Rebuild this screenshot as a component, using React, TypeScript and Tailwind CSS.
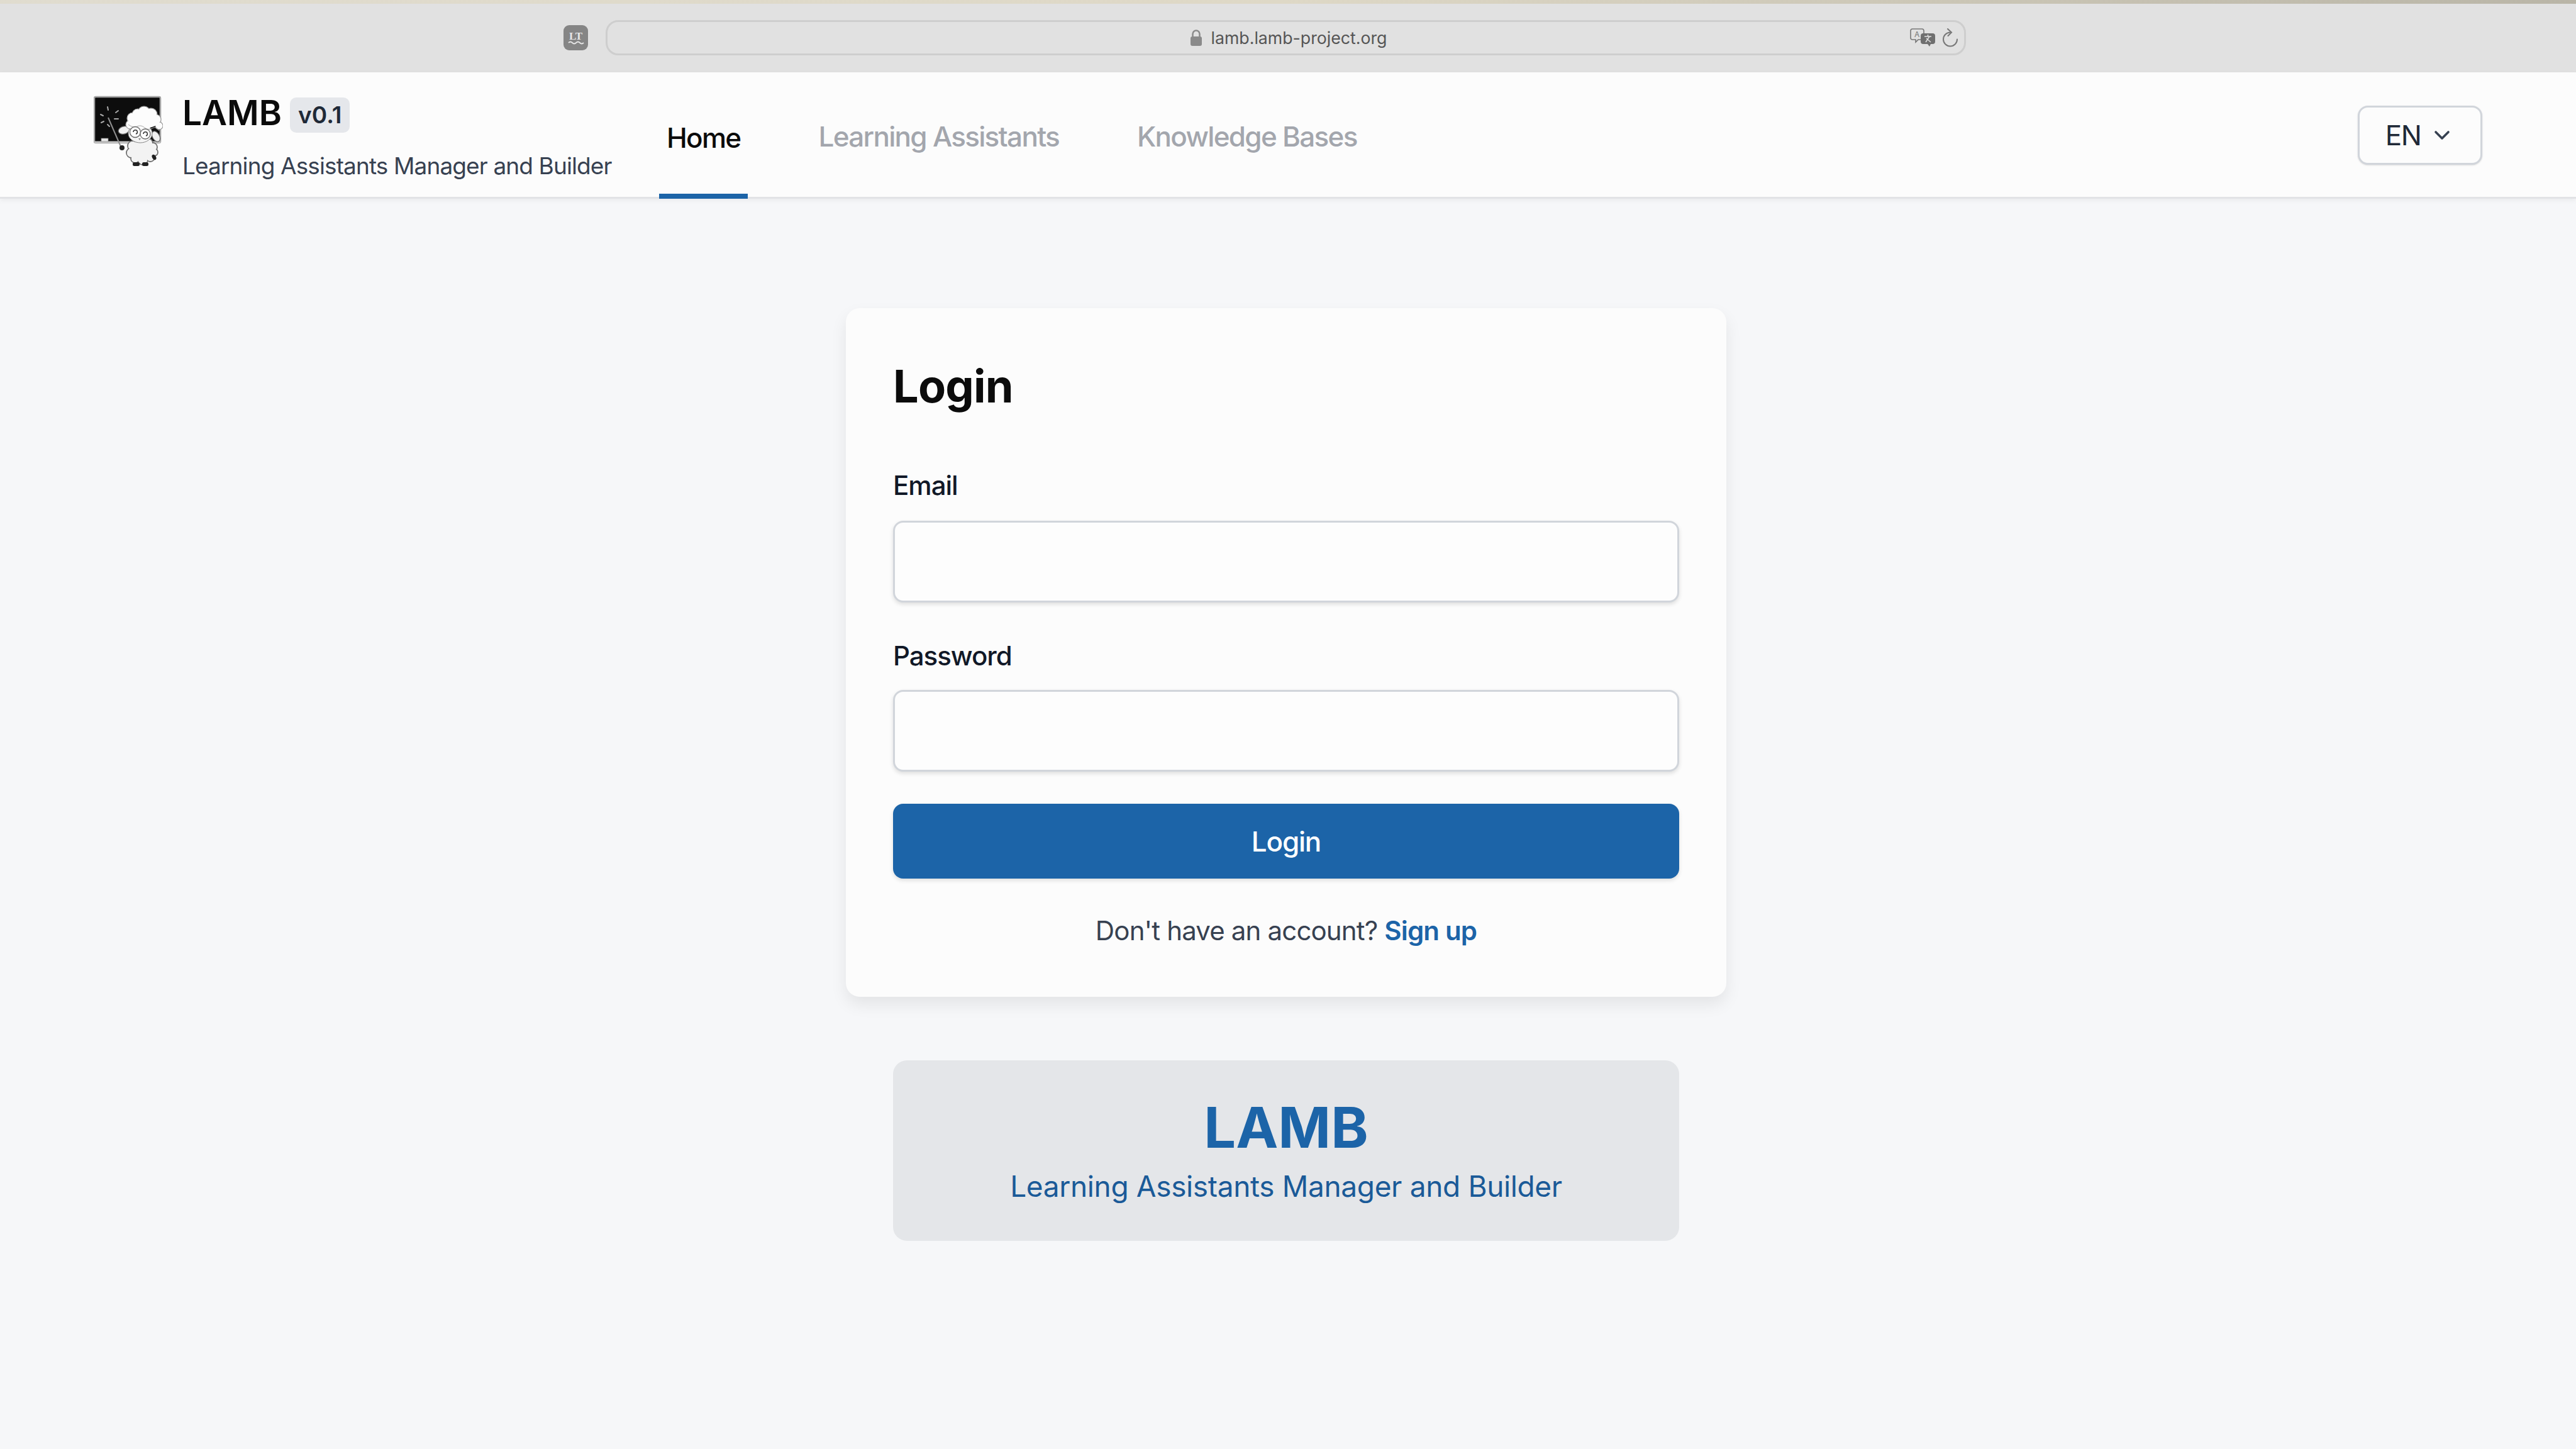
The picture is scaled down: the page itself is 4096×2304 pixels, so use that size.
import React from "react";

const wool: number[][] = [[92,58,9],[100,52,9],[110,49,10],[121,52,10],[129,60,8],[134,70,6],[88,68,7]];
const coat: number[][] = [[92,102,8],[103,98,8],[116,98,8],[124,104,7],[90,113,8],[96,122,7],[108,124,8],[120,120,7],[126,112,6]];

function Logo() {
  return (
    <svg width="110" height="118" viewBox="30 20 110 118" className="shrink-0">
      <rect x="31" y="24" width="105" height="73" rx="2" fill="#0d0d0d" stroke="#a3a3a3" strokeWidth="2.500" />
      <path d="M31 96h105" stroke="#c4c4c4" strokeWidth="3" />
      <rect x="42" y="90" width="11" height="5" fill="#e6e6e6" stroke="#8a8a8a" strokeWidth="0.700" />
      <path d="M52 40l1 5M41 52l4 2M65 49l4-3M63 59h6M42 65l4-2M52 68l3 3" stroke="#a9a9a9" strokeWidth="2" strokeLinecap="round" />
      <path d="M53 57L73 103" stroke="#8f8f8f" strokeWidth="2" />
      <circle cx="75" cy="105" r="4" fill="#222" />
      {coat.map(([x, y, r], i) => <circle key={i} cx={x} cy={y} r={r} fill="#e4e4e4" stroke="#6f6f6f" strokeWidth="1.800" />)}
      <ellipse cx="107" cy="110" rx="17" ry="15" fill="#f3f3f3" />
      {coat.map(([x, y, r], i) => <circle key={i} cx={x} cy={y} r={r - 0.9} fill="#f3f3f3" />)}
      <ellipse cx="126" cy="120" rx="3" ry="4.500" fill="#1f1f1f" transform="rotate(-30 126 120)" />
      <rect x="92" y="128" width="11" height="6" rx="2.500" fill="#222" />
      <rect x="107" y="128" width="10" height="6" rx="2.500" fill="#222" />
      <ellipse cx="78" cy="77" rx="9" ry="6" fill="#efefef" stroke="#666" strokeWidth="1.200" transform="rotate(-15 78 77)" />
      <ellipse cx="129" cy="87" rx="5.500" ry="9" fill="#efefef" stroke="#666" strokeWidth="1.200" transform="rotate(-30 129 87)" />
      <ellipse cx="104" cy="82" rx="19" ry="15" fill="#f4f4f4" stroke="#888" strokeWidth="1" />
      {wool.map(([x, y, r], i) => <circle key={i} cx={x} cy={y} r={r} fill="#fcfcfc" stroke="#9a9a9a" strokeWidth="1.200" />)}
      <ellipse cx="110" cy="63" rx="23" ry="11" fill="#fcfcfc" />
      {wool.map(([x, y, r], i) => <circle key={i} cx={x} cy={y} r={r - 0.9} fill="#fcfcfc" />)}
      <path d="M85 68q8 6 14 3t12 2 12 1 11 4" fill="none" stroke="#aaa" strokeWidth="1" />
      <circle cx="96" cy="80" r="8.500" fill="#fdfdfd" stroke="#666" strokeWidth="1.300" />
      <circle cx="112" cy="83" r="8" fill="#fdfdfd" stroke="#666" strokeWidth="1.300" />
      <path d="M93 80a3.200 3.200 0 1 1 4 3M109 83a3.200 3.200 0 1 1 4 3" fill="none" stroke="#333" strokeWidth="1.500" />
      <path d="M101 90l2 3 2-3z" fill="#888" />
    </svg>
  );
}

function TranslateIcon() {
  return (
    <svg width="40" height="30" viewBox="0 0 40 30" className="shrink-0">
      <path d="M4 1h15a3 3 0 0 1 3 3v11a3 3 0 0 1-3 3h-6l-4 4v-4H4a3 3 0 0 1-3-3V4a3 3 0 0 1 3-3z" fill="none" stroke="#777" strokeWidth="1.600" />
      <text x="7" y="13.500" fontSize="12" fontFamily="Inter, sans-serif" fill="#777">A</text>
      <path d="M21 8h15a4 4 0 0 1 4 4v9a4 4 0 0 1-4 4h-3l-2 4-3-4h-7a4 4 0 0 1-4-4v-9a4 4 0 0 1 4-4z" fill="#6f6f6f" />
      <path d="M23 13h11M28.500 10v3M25 22l6-9M26 16l7 6" fill="none" stroke="#e1e1e1" strokeWidth="1.500" />
    </svg>
  );
}

export default function App() {
  return (
    <div className="w-[4096px] h-[2304px] overflow-hidden flex flex-col bg-[#f6f7f9] text-[#111827] font-['Inter','Liberation_Sans',sans-serif]">
      <div className="h-[6px] shrink-0 bg-gradient-to-r from-[#e0dccf] via-[#ded8c6] to-[#b9b5a7]" />
      <div className="h-[109px] shrink-0 bg-[#e1e1e1] flex pt-[26px] items-start">
        <div className="ml-[896px] mt-[8px] w-[39px] h-[40px] rounded-[9px] bg-[#858585] flex flex-col items-center justify-center text-[#e8e8e8]">
          <span className="text-[17px] leading-[15px] font-semibold font-['Liberation_Serif',serif]">LT</span>
          <svg width="26" height="6" viewBox="0 0 26 6"><path d="M1 3q3-3 6 0t6 0 6 0 6 0" fill="none" stroke="#e8e8e8" strokeWidth="1.800" /></svg>
        </div>
        <div className="ml-[28px] w-[2163px] h-[56px] rounded-[20px] border-[3px] border-[#cecece] flex items-center relative">
          <div className="absolute inset-0 flex items-center justify-center gap-[14px] pl-[8px]">
            <svg width="20" height="27" viewBox="0 0 20 27"><path d="M4.500 12V7a5.500 5.500 0 0 1 11 0v5" fill="none" stroke="#8a8a8a" strokeWidth="2.500" /><rect x="1" y="11" width="18" height="15" rx="3" fill="#8a8a8a" /></svg>
            <span className="text-[26.700px] leading-[36px] text-[#555555]">lamb.lamb-project.org</span>
          </div>
          <div className="ml-auto mr-[9px] flex items-center gap-[11px] relative">
            <TranslateIcon />
            <svg width="26" height="30" viewBox="0 0 26 30"><path d="M24 17.500A11 11 0 1 1 13 6.500" fill="none" stroke="#777" strokeWidth="2" strokeLinecap="round" /><path d="M9 1l6 5.500-5.500 5.500" fill="none" stroke="#777" strokeWidth="2" strokeLinecap="round" /></svg>
          </div>
        </div>
      </div>

      <header className="h-[201px] shrink-0 bg-[#fcfcfc] border-b-[3px] border-[#e2e3e6] shadow-[0_3px_8px_rgba(0,0,0,0.05)] flex items-stretch pl-[149px] pr-[149px]">
        <div className="pt-[35px]"><Logo /></div>
        <div className="ml-[31px] w-[758px] shrink-0 flex flex-col pt-[36px]">
          <div className="flex items-center h-[56px] gap-[13px]">
            <span className="text-[55px] leading-[56px] font-semibold text-[#0b0b0b]">LAMB</span>
            <span className="h-[56px] px-[13px] rounded-[10px] bg-[#e5e7eb] flex items-center text-[37px] font-semibold text-[#1f2937] mt-[8px]">v0.1</span>
          </div>
          <span className="mt-[31px] text-[37px] leading-[52px] text-[#374151] tracking-[-0.88px]">Learning Assistants Manager and Builder</span>
        </div>
        <nav className="flex items-stretch gap-[100px] text-[44px] tracking-[-1.7px]">
          <a className="px-[12px] flex items-center border-b-[8px] border-[#1c64a8] pt-[14px] font-medium text-[#0b0b0b] -mb-[3px]">Home</a>
          <a className="px-[12px] flex items-center pt-[6px] font-medium text-[#a3a6ad]">Learning Assistants</a>
          <a className="px-[12px] flex items-center pt-[6px] font-medium text-[#a3a6ad]">Knowledge Bases</a>
        </nav>
        <div className="ml-auto self-start mt-[53px] w-[198px] h-[94px] rounded-[16px] border-[3px] border-[#d1d5db] bg-[#fcfcfc] shadow-sm flex items-center justify-center gap-[14px] text-[44px] tracking-[-1.5px] text-[#1f2937]">
          <span>EN</span>
          <svg width="40" height="40" viewBox="0 0 20 20"><path d="M5 7.500l5 5 5-5" fill="none" stroke="#374151" strokeWidth="1.800" strokeLinecap="round" strokeLinejoin="round" /></svg>
        </div>
      </header>

      <main className="flex flex-col items-center pt-[174px] pr-[6px]">
        <section className="w-[1400px] h-[1095px] rounded-[22px] bg-[#fcfcfc] shadow-[0_12px_26px_rgba(0,0,0,0.08)] px-[75px] pt-[74px]">
          <h1 className="text-[72px] leading-[100px] font-bold text-[#0b0b0b] tracking-[-0.8px]">Login</h1>
          <label className="block mt-[81px] text-[42px] leading-[54px] font-medium text-[#111827] tracking-[-1px]">Email</label>
          <div className="mt-[29px] h-[130px] rounded-[16px] border-[3px] border-[#d1d5db] bg-[#fdfdfd] shadow-[0_3px_6px_rgba(0,0,0,0.12)]" />
          <label className="block mt-[58px] text-[42px] leading-[54px] font-medium text-[#111827] tracking-[-1px]">Password</label>
          <div className="mt-[27px] h-[130px] rounded-[16px] border-[3px] border-[#d1d5db] bg-[#fdfdfd] shadow-[0_3px_6px_rgba(0,0,0,0.12)]" />
          <button className="mt-[51px] w-full h-[119px] rounded-[16px] bg-[#1c64a8] shadow-[0_3px_6px_rgba(0,0,0,0.12)] text-[44px] tracking-[-1.2px] font-medium text-[#ffffff]">Login</button>
          <p className="mt-[58px] text-center text-[42px] leading-[50px] tracking-[-0.85px] text-[#374151]">Don't have an account? <a className="font-semibold text-[#1c64a8]">Sign up</a></p>
        </section>
        <section className="mt-[101px] w-[1250px] h-[287px] rounded-[22px] bg-[#e4e6e9] flex flex-col items-center pt-[51px]">
          <h2 className="text-[90px] leading-[112px] font-bold text-[#1c64a8]">LAMB</h2>
          <p className="mt-[7px] text-[46px] leading-[60px] tracking-[-0.35px] text-[#1a5a98]">Learning Assistants Manager and Builder</p>
        </section>
      </main>
    </div>
  );
}
